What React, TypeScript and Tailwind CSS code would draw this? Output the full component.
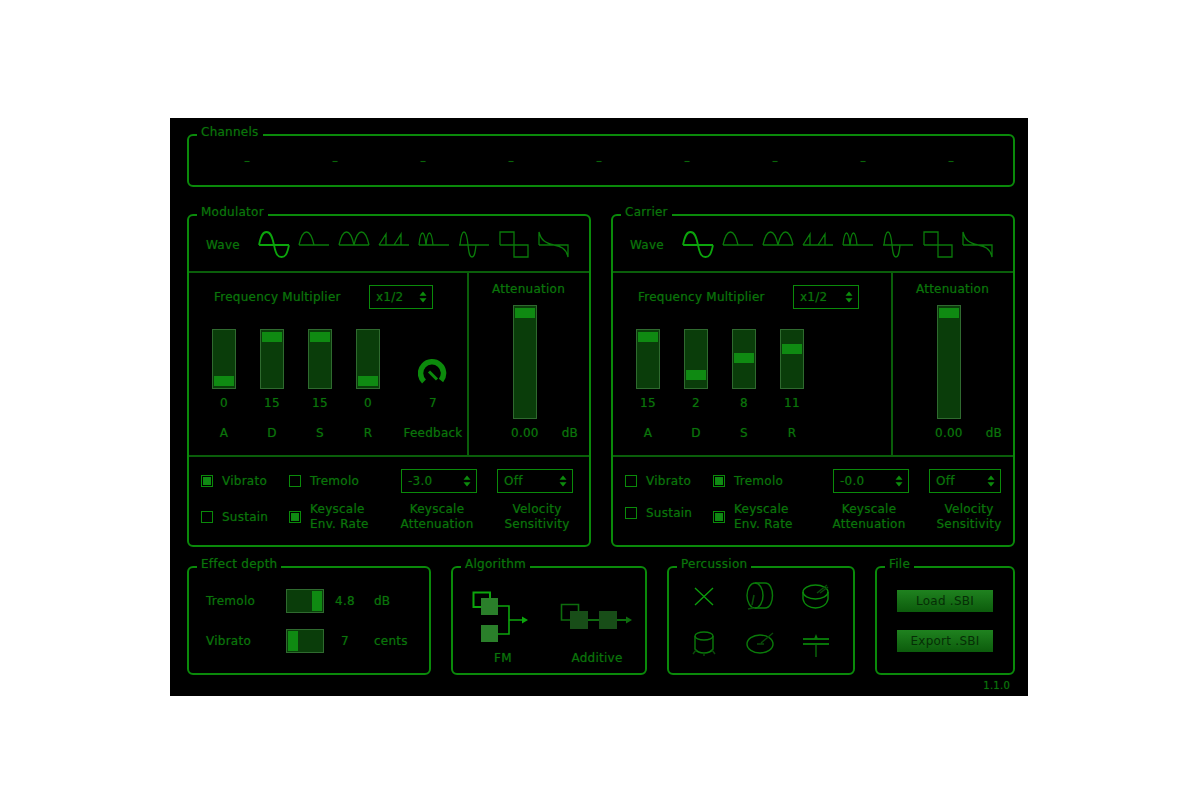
import type { ReactNode } from 'react';

const FONT = 'font-["DejaVu_Sans",sans-serif]';
const TEXT = 'text-[12px] leading-4 tracking-[0.25px] text-[#0a740a] [text-shadow:0_0_1px_rgba(12,130,12,0.5)]';

function Group({ title, className, children }: { title: string; className: string; children?: ReactNode }) {
  return (
    <div className={`relative border-2 border-[#0a8a0a] rounded-[6px] ${className}`}>
      <span className="absolute left-[8px] top-[-12px] bg-black px-[4px] whitespace-nowrap">{title}</span>
      {children}
    </div>
  );
}

function Arrows() {
  return (
    <svg width="8" height="12" viewBox="0 0 8 12" className="shrink-0">
      <path d="M4 0.5 L7.5 4.8 H0.5 Z M4 11.5 L7.5 7.2 H0.5 Z" fill="#0c8c0c" />
    </svg>
  );
}

function Stepper({ value, width }: { value: string; width: string }) {
  return (
    <div className={`h-6 border border-[#0a8a0a] flex items-center justify-between pl-[6px] pr-[5px] ${width}`}>
      <span>{value}</span>
      <Arrows />
    </div>
  );
}

function VSlider({ value, tall }: { value: number; tall?: boolean }) {
  // thumb travel is 44px over the 0-15 range on the short sliders
  const top = tall ? 2 : 46 - (value * 44) / 15;
  return (
    <div className={`relative w-6 shrink-0 border border-[#2f6a2f] bg-[#0a3d0a] ${tall ? 'h-[114px]' : 'h-[60px]'}`}>
      <div className="absolute left-[1px] w-5 h-[10px] bg-[#0f8a12]" style={{ top }} />
    </div>
  );
}

function HSlider({ left }: { left: number }) {
  return (
    <div className="relative w-[38px] h-6 shrink-0 border border-[#2f6a2f] bg-[#0a3d0a]">
      <div className="absolute top-[1px] w-[10px] h-5 bg-[#0f8a12]" style={{ left }} />
    </div>
  );
}

function Check({ on }: { on?: boolean }) {
  return (
    <div className="w-3 h-3 shrink-0 border border-[#0a8a0a] flex items-center justify-center">
      {on && <div className="w-2 h-2 bg-[#0f8a12]" />}
    </div>
  );
}

function CheckLabel({ on, children }: { on?: boolean; children: ReactNode }) {
  return (
    <div className="flex items-center gap-[9px] leading-[15px]">
      <Check on={on} />
      <span>{children}</span>
    </div>
  );
}

const WAVES = [
  'M0 13 H30 M0 13 C2 3 4 0 7.5 0 C11 0 13 3 15 13 C17 23 19 25 22.5 25 C26 25 28 23 30 13',
  'M0 13 H30 M0 13 C2 4 4 0 7.5 0 C11 0 13 4 15 13',
  'M0 13 H30 M0 13 C2 4 4 0 7.5 0 C11 0 13 4 15 13 C17 4 19 0 22.5 0 C26 0 28 4 30 13',
  'M0 13 H30 M0 13 C2 10 5 5 7 2 V13 M15 13 C17 10 20 5 22 2 V13',
  'M0 13 H30 M0 13 C1 3 2 1 3.5 1 C5 1 6 3 7 13 C8 3 9 1 10.5 1 C12 1 13 3 14 13',
  'M0 13 H30 M1 13 C2 3 3 0 5 0 C7 0 8 3 9 13 C10 23 11 25 13 25 C15 25 16 23 17 13',
  'M1 13 V0 H15 V25 H29 V13 H1',
  'M0 13 V0 C2 8 6 11 15 13 C21 14 27 16 29 25 V13 H0',
];

function WaveRow() {
  return (
    <div className="h-[57px] border-b-2 border-[#0a5e0a] flex items-center pl-[17px]">
      <span className="w-[53px] pt-[2px]">Wave</span>
      <div className="flex gap-[10px] pt-[2px]">
        {WAVES.map((d, i) => (
          <svg key={i} width="30" height="26" viewBox="0 0 30 26" fill="none" className="overflow-visible">
            <path d={d} stroke={i === 0 ? '#0ca50c' : '#0a7a0a'} strokeWidth={i === 0 ? 1.8 : 1.3} />
          </svg>
        ))}
      </div>
    </div>
  );
}

type Env = { name: string; value: number };

function Panel({
  title,
  className,
  env,
  freqWidth,
  feedback,
  vibrato,
  tremolo,
  atten,
  col2,
  velWidth,
  velPad,
  sustainPad,
}: {
  title: string;
  className: string;
  env: Env[];
  freqWidth: string;
  feedback?: boolean;
  vibrato?: boolean;
  tremolo?: boolean;
  atten: string;
  col2: string;
  velWidth: string;
  velPad: string;
  sustainPad: string;
}) {
  return (
    <Group title={title} className={className}>
      <WaveRow />
      <div className="flex h-[184px] border-b-2 border-[#0a5e0a]">
        <div className="w-[280px] border-r-2 border-[#0a5e0a] pl-[23px] pt-[12px]">
          <div className="flex items-center h-6">
            <span className="ml-[2px] w-[155px]">Frequency Multiplier</span>
            <Stepper value="x1/2" width={freqWidth} />
          </div>
          <div className="flex mt-[20px]">
            <div className="flex gap-6">
              {env.map((e) => (
                <div key={e.name} className="w-6 flex flex-col items-center">
                  <VSlider value={e.value} />
                  <span className="mt-[6px]">{e.value}</span>
                  <span className="mt-[14px]">{e.name}</span>
                </div>
              ))}
            </div>
            {feedback && (
              <div className="w-16 ml-[21px] flex flex-col items-center">
                <div className="h-[60px] pt-[30px]">
                  <svg width="30" height="30" viewBox="1 0.5 30 30" fill="none">
                    <path d="M7 23 A11.5 11.5 0 1 1 24 22" stroke="#0c8a0c" strokeWidth="5.5" />
                    <path d="M12 13 L20 21" stroke="#0c8a0c" strokeWidth="3" />
                  </svg>
                </div>
                <span className="mt-[6px]">7</span>
                <span className="mt-[14px]">Feedback</span>
              </div>
            )}
          </div>
        </div>
        <div className="flex-1 flex flex-col pt-[8px]">
          <span className="text-center pr-[1px]">Attenuation</span>
          <div className="mt-[8px] pl-[44px]">
            <VSlider value={0} tall />
          </div>
          <div className="flex mt-[6px] pl-[42px]">
            <span>0.00</span>
            <span className="ml-[23px]">dB</span>
          </div>
        </div>
      </div>
      <div className="flex pl-[12px] pt-[12px]">
        <div className="w-[88px] shrink-0">
          <div className="h-6 flex items-center">
            <CheckLabel on={vibrato}>Vibrato</CheckLabel>
          </div>
          <div className={`mt-[9px] h-[30px] flex items-center ${sustainPad}`}>
            <CheckLabel>Sustain</CheckLabel>
          </div>
        </div>
        <div className={`shrink-0 ${col2}`}>
          <div className="h-6 flex items-center">
            <CheckLabel on={tremolo}>Tremolo</CheckLabel>
          </div>
          <div className="mt-[9px] h-[30px] flex items-center">
            <CheckLabel on>
              Keyscale
              <br />
              Env. Rate
            </CheckLabel>
          </div>
        </div>
        <div className="w-[76px] flex flex-col items-center">
          <Stepper value={atten} width="w-full" />
          <span className="mt-[9px] pr-1 text-center whitespace-nowrap leading-[15px]">
            Keyscale
            <br />
            Attenuation
          </span>
        </div>
        <div className={`ml-5 flex flex-col items-center ${velWidth}`}>
          <Stepper value="Off" width="w-full" />
          <span className={`mt-[9px] text-center whitespace-nowrap leading-[15px] ${velPad}`}>
            Velocity
            <br />
            Sensitivity
          </span>
        </div>
      </div>
    </Group>
  );
}

function FmDiagram() {
  return (
    <svg width="60" height="55" viewBox="0 0 60 55" fill="none" className="ml-[17px] mt-[22px]">
      <path d="M11 17 H3.5 V2.5 H20 V8" stroke="#0ca50c" strokeWidth="2" />
      <path d="M28 16 H39 V44 H28 M39 30 H53" stroke="#0ca50c" strokeWidth="1.6" />
      <path d="M52 26.5 L58 30 L52 33.5 Z" fill="#0ca50c" />
      <rect x="11" y="8" width="17" height="17" fill="#2a7f2a" />
      <rect x="11" y="35" width="17" height="17" fill="#2a7f2a" />
    </svg>
  );
}

function AdditiveDiagram() {
  return (
    <svg width="76" height="32" viewBox="0 0 76 32" fill="none" className="ml-[5px] mt-[32px]">
      <path d="M12 20 H3.5 V4.5 H20.5 V11" stroke="#0d6d0d" strokeWidth="1.6" />
      <path d="M30 20 H41 M59 20 H69" stroke="#0d6d0d" strokeWidth="1.8" />
      <path d="M68 16.5 L74 20 L68 23.5 Z" fill="#0d6d0d" />
      <rect x="12" y="11" width="18" height="18" fill="#184d18" />
      <rect x="41" y="11" width="18" height="18" fill="#184d18" />
    </svg>
  );
}

const ICON_BRIGHT = '#0a8a0a';
const ICON_DIM = '#0a4a0a';

const ICONS: ReactNode[] = [
  <path key="x" d="M6 7 L24 24 M24 7 L6 24" stroke="#0ca00c" strokeWidth="1.3" />,
  <g key="bass" strokeWidth="1.4">
    <ellipse cx="10" cy="14.5" rx="8" ry="12.5" stroke="#0a7a0a" />
    <path d="M10 2 H20 C25 2 27.5 8 27.5 14.5 C27.5 21 25 27 20 27 H10" stroke="#0a7a0a" />
    <path d="M3 28 L8 27 M9 14 L7 24" stroke={ICON_DIM} strokeWidth="1.6" />
  </g>,
  <g key="tom" strokeWidth="1.4">
    <ellipse cx="14.5" cy="11" rx="12.5" ry="7" stroke={ICON_BRIGHT} />
    <path d="M2 11 V18 C3 24 9 27 14.5 27 C20 27 26 24 27 18 V11" stroke={ICON_BRIGHT} />
    <path d="M16 12 L26 4 M19 12 L27 6" stroke={ICON_DIM} />
  </g>,
  <g key="snare" strokeWidth="1.4">
    <ellipse cx="15" cy="7" rx="9" ry="4" stroke="#0a7a0a" />
    <path d="M6 7 V20 C8 23 12 24 15 24 C18 24 22 23 24 20 V7" stroke="#0a7a0a" />
    <path d="M7 21 L4 25 M23 21 L26 25 M15 24 V27" stroke={ICON_DIM} />
  </g>,
  <g key="hat" strokeWidth="1.4">
    <ellipse cx="15" cy="15" rx="13" ry="9" stroke="#0a7a0a" />
    <path d="M12 15 H19 M16 14 L28 4" stroke={ICON_DIM} />
  </g>,
  <g key="cymbal">
    <path d="M2 10 H28 M2 15 H28" stroke="#0a9a0a" strokeWidth="1.7" />
    <path d="M13 10 L15 5 L17 10 Z" fill="#0a7a0a" />
    <path d="M15 15 V28" stroke="#0a6a0a" strokeWidth="1.4" />
  </g>,
];

export default function App() {
  return (
    <div className={`min-h-screen bg-white pt-[118px] ${FONT} ${TEXT}`}>
      <div className="ml-[170px] w-[858px] h-[578px] bg-black pt-4 pl-[17px]">
        <Group title="Channels" className="w-[828px] h-[53px]">
          <div className="grid grid-cols-9 pl-[14px] pr-[18px] pt-[17px] text-center text-[#0a6a0a]">
            {Array.from({ length: 9 }, (_, i) => (
              <span key={i}>–</span>
            ))}
          </div>
        </Group>

        <div className="flex gap-5 mt-[27px]">
          <Panel
            title="Modulator"
            className="w-[404px] h-[333px]"
            env={[
              { name: 'A', value: 0 },
              { name: 'D', value: 15 },
              { name: 'S', value: 15 },
              { name: 'R', value: 0 },
            ]}
            freqWidth="w-16"
            feedback
            vibrato
            atten="-3.0"
            col2="w-[112px]"
            velWidth="w-[76px]"
            velPad="pl-1"
            sustainPad=""
          />
          <Panel
            title="Carrier"
            className="w-[404px] h-[333px]"
            env={[
              { name: 'A', value: 15 },
              { name: 'D', value: 2 },
              { name: 'S', value: 8 },
              { name: 'R', value: 11 },
            ]}
            freqWidth="w-[66px]"
            tremolo
            atten="-0.0"
            col2="w-[120px]"
            velWidth="w-[72px]"
            velPad="pl-2"
            sustainPad="pb-2"
          />
        </div>

        <div className="flex gap-5 mt-[19px]">
          <Group title="Effect depth" className="w-[244px] h-[109px]">
            <div className="pl-[17px] pt-[21px]">
              <div className="flex items-center h-6">
                <span className="w-20">Tremolo</span>
                <HSlider left={25} />
                <span className="w-[42px] text-center">4.8</span>
                <span className="ml-2">dB</span>
              </div>
              <div className="flex items-center h-6 mt-4">
                <span className="w-20">Vibrato</span>
                <HSlider left={1} />
                <span className="w-[42px] text-center">7</span>
                <span className="ml-2">cents</span>
              </div>
            </div>
          </Group>

          <Group title="Algorithm" className="w-[196px] h-[109px]">
            <div className="flex">
              <div className="w-[100px] h-[98px] flex flex-col">
                <FmDiagram />
                <span className="mt-auto text-center">FM</span>
              </div>
              <div className="w-[88px] h-[98px] flex flex-col">
                <AdditiveDiagram />
                <span className="mt-auto text-center">Additive</span>
              </div>
            </div>
          </Group>

          <Group title="Percussion" className="w-[188px] h-[109px]">
            <div className="grid grid-cols-[30px_30px_30px] gap-x-[26px] gap-y-[18px] pl-5 pt-[13px]">
              {ICONS.map((icon, i) => (
                <svg key={i} width="30" height="30" viewBox="0 0 30 30" fill="none">
                  {icon}
                </svg>
              ))}
            </div>
          </Group>

          <Group title="File" className="w-[140px] h-[109px]">
            <div className="flex flex-col items-center gap-[18px] pt-[22px] text-[#062e06] [text-shadow:none]">
              <button className="w-[96px] h-[22px] bg-gradient-to-b from-[#1f821f] to-[#0c5c0c]">Load .SBI</button>
              <button className="w-[96px] h-[22px] bg-gradient-to-b from-[#1f821f] to-[#0c5c0c]">Export .SBI</button>
            </div>
          </Group>
        </div>

        <div className="w-[823px] text-right text-[10px] leading-3 mt-[5px]">1.1.0</div>
      </div>
    </div>
  );
}
